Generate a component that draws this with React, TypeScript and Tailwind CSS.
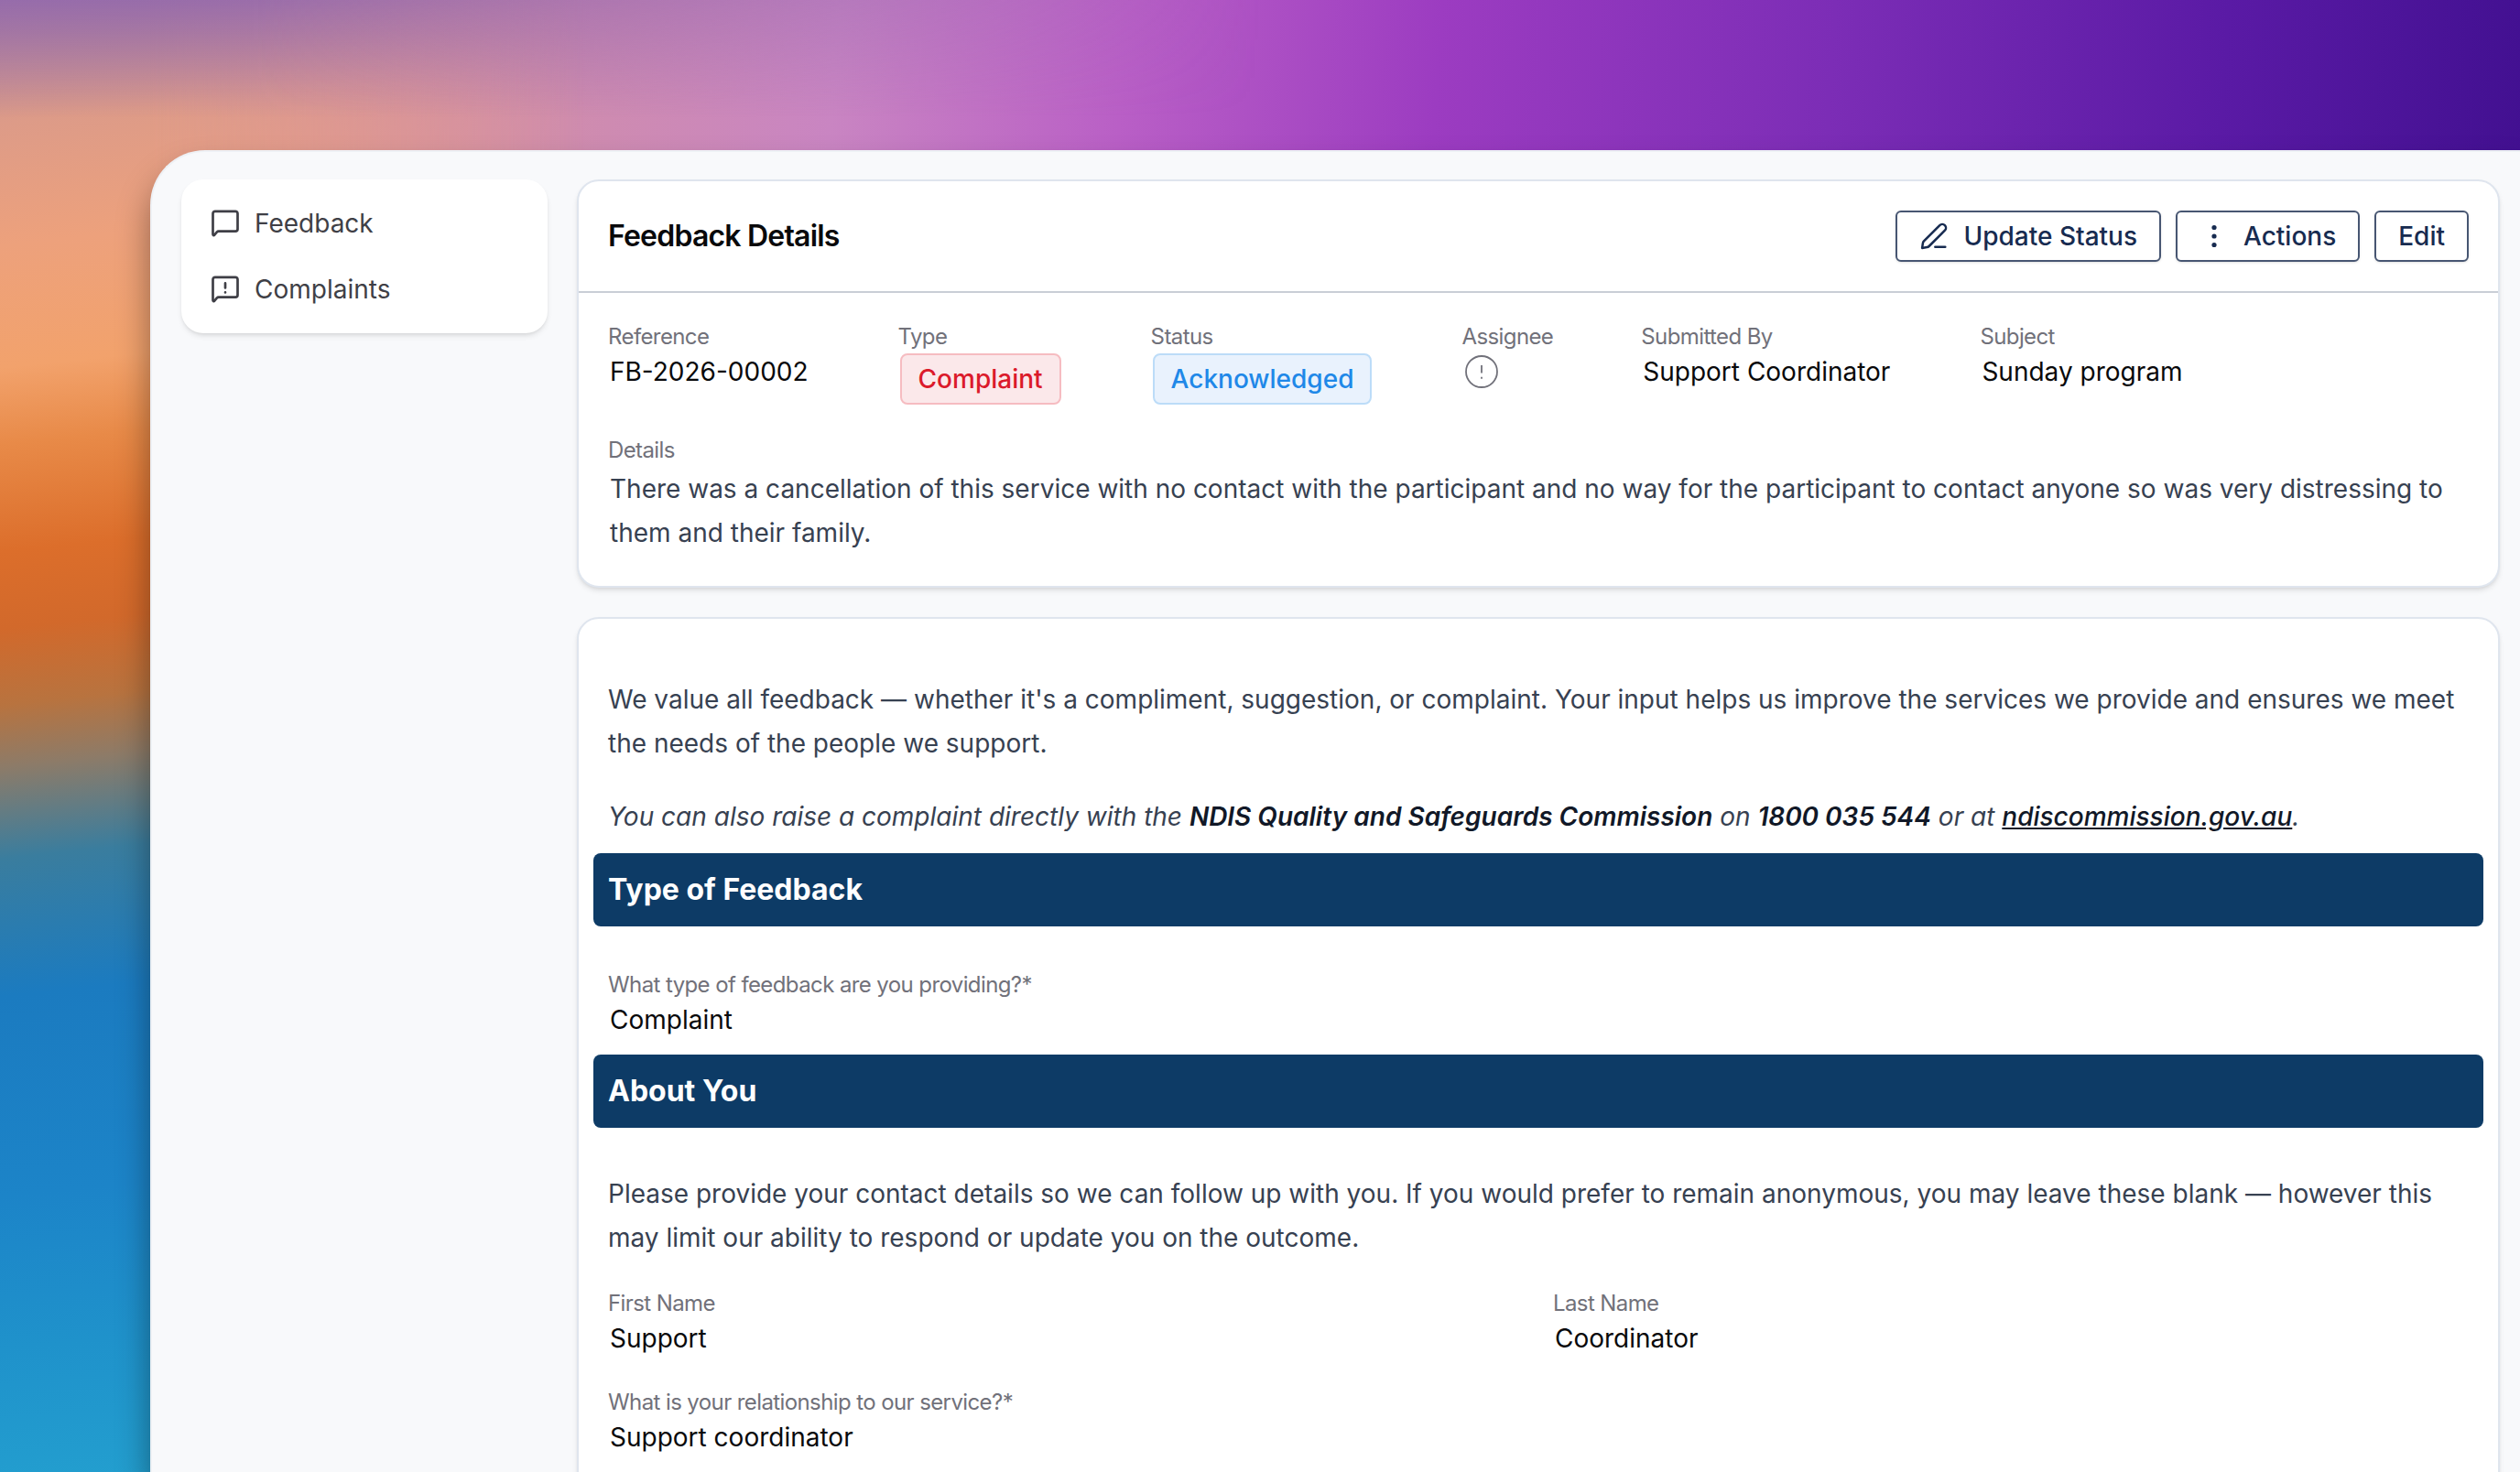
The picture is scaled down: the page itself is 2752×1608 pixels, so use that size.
import { clsx } from "clsx";

const navItems = [
  { label: "Feedback", alert: false },
  { label: "Complaints", alert: true },
];

const BUTTON =
  "flex h-14 items-center rounded-md border-2 border-[#475672] bg-white text-[28px] leading-10 font-medium text-[#172b50] shadow-sm";

function BubbleIcon({ alert }: { alert: boolean }) {
  return (
    <svg
      className="h-9 w-9 shrink-0"
      viewBox="0 0 24 24"
      fill="none"
      stroke="currentColor"
      strokeWidth="1.8"
      strokeLinecap="round"
      strokeLinejoin="round"
      aria-hidden="true"
    >
      <path d="M21 16.2a1.6 1.6 0 0 1-1.6 1.6H7.2a2 2 0 0 0-1.4.6l-1.7 2.1A.65.65 0 0 1 3 20V4.8a1.6 1.6 0 0 1 1.6-1.6h14.8A1.6 1.6 0 0 1 21 4.8z" />
      {alert && <path d="M12 7.6v3.4M12 14.3v.01" />}
    </svg>
  );
}

function PenIcon() {
  return (
    <svg
      className="h-8 w-8"
      viewBox="0 0 32 32"
      fill="none"
      stroke="currentColor"
      strokeWidth="2.5"
      strokeLinecap="round"
      strokeLinejoin="round"
      aria-hidden="true"
    >
      <path d="M3.1 28.9 3.9 23.6Q4.1 22.3 5 21.4L22.3 4.1a3.9 3.9 0 0 1 5.6 5.6L10.6 27Q9.7 27.9 8.4 28.1z" />
      <path d="M17.3 27.7h11" />
    </svg>
  );
}

function DotsIcon() {
  return (
    <svg className="h-8 w-8" viewBox="0 0 32 32" fill="currentColor" aria-hidden="true">
      <circle cx="16" cy="6.5" r="2.6" />
      <circle cx="16" cy="16" r="2.6" />
      <circle cx="16" cy="25.5" r="2.6" />
    </svg>
  );
}

function AlertIcon() {
  return (
    <svg
      className="h-10 w-10 text-[#71717a]"
      viewBox="0 0 40 40"
      fill="none"
      stroke="currentColor"
      strokeWidth="1.8"
      role="img"
      aria-label="Unassigned"
    >
      <circle cx="20" cy="20" r="17" />
      <path d="M20 13v8.5M20 25.8v2" />
    </svg>
  );
}

function Field({ label, children }: { label: string; children: React.ReactNode }) {
  return (
    <div>
      <dt className="text-2xl leading-9 tracking-tight text-[#71717a]">{label}</dt>
      <dd className="flex px-0.5 text-[28px] leading-10 text-[#09090b]">{children}</dd>
    </div>
  );
}

function Badge({ tone, children }: { tone: "red" | "blue"; children: React.ReactNode }) {
  return (
    <span
      className={clsx(
        "rounded-lg border-2 px-4.5 py-1.5 text-[28px] leading-10 font-medium",
        tone === "red" && "border-[#f6bcc1] bg-[#fbe8ea] text-[#db1a2b]",
        tone === "blue" && "border-[#bcdcf8] bg-[#e9f2fd] text-[#2088e8]",
      )}
    >
      {children}
    </span>
  );
}

function SectionBar({ children }: { children: React.ReactNode }) {
  return (
    <h3 className="rounded-lg bg-[#0d3b66] px-4 py-5 text-[32px] leading-10 font-bold text-white">
      {children}
    </h3>
  );
}

function Wallpaper() {
  return (
    <div className="absolute inset-0 bg-[linear-gradient(94deg,#e39a90_0%,#cf8cae_22%,#c985c2_32%,#b95fc6_43%,#9c3cc1_55%,#7c2db6_70%,#5a1aa5_85%,#3b0d8b_100%)]">
      <div className="absolute inset-y-0 left-0 w-160 bg-[linear-gradient(174deg,#b58a9a_0%,#dd9b88_8%,#eda17c_16%,#f2a26c_24%,#e88a48_29%,#dc6e2b_36%,#d2692b_41%,#b8733f_46%,#8d7b68_50%,#3a7d9e_56%,#1b7bc0_65%,#1c84c8_78%,#1f92cb_88%,#24a2d0_100%)] mask-r-from-25%" />
      <div className="absolute inset-x-0 top-0 h-32 bg-[linear-gradient(180deg,rgba(140,98,176,0.75),rgba(140,98,176,0))] mask-r-from-10% mask-r-to-50%" />
    </div>
  );
}

export default function App() {
  return (
    <div className="relative h-screen overflow-hidden pt-41 pl-41 font-[Inter,sans-serif]">
      <Wallpaper />

      <div className="relative flex h-full items-start gap-8 rounded-tl-[60px] border-t-2 border-l-2 border-[#eef1f5] bg-[#f8f9fb] pt-7.5 pr-5.5 pl-8 shadow-[0_24px_36px_rgba(0,0,0,0.4)]">
        <nav className="flex w-100 shrink-0 flex-col gap-8 rounded-3xl bg-white px-7.5 py-7 shadow-md">
          {navItems.map((item) => (
            <a key={item.label} href="#" className="flex items-center gap-3.5 text-[28px] leading-10 text-[#3f3f46]">
              <BubbleIcon alert={item.alert} />
              {item.label}
            </a>
          ))}
        </nav>

        <main className="flex min-w-0 grow flex-col gap-8">
          <section className="rounded-3xl border-2 border-[#dfe5ee] bg-white shadow-md">
            <header className="flex items-center justify-between border-b-2 border-[#c9ced6] px-8 py-8">
              <h2 className="text-[32px] leading-10 font-semibold tracking-tight text-[#09090b]">Feedback Details</h2>
              <div className="flex gap-4">
                <button type="button" className={clsx(BUTTON, "gap-4 px-6")}>
                  <PenIcon />
                  Update Status
                </button>
                <button type="button" className={clsx(BUTTON, "gap-4 px-6")}>
                  <DotsIcon />
                  Actions
                </button>
                <button type="button" className={clsx(BUTTON, "px-6")}>Edit</button>
              </div>
            </header>

            <dl className="flex gap-x-24 px-8 pt-7.5">
              <Field label="Reference">FB-2026-00002</Field>
              <Field label="Type"><Badge tone="red">Complaint</Badge></Field>
              <Field label="Status"><Badge tone="blue">Acknowledged</Badge></Field>
              <Field label="Assignee"><AlertIcon /></Field>
              <Field label="Submitted By">Support Coordinator</Field>
              <Field label="Subject">Sunday program</Field>
            </dl>

            <div className="p-8">
              <h3 className="text-2xl leading-9 tracking-tight text-[#71717a]">Details</h3>
              <p className="px-0.5 pb-0.5 text-[28px] leading-12 text-[#374151]">
                There was a cancellation of this service with no contact with the participant and no way for the
                participant to contact anyone so was very distressing to them and their family.
              </p>
            </div>
          </section>

          <section className="rounded-t-3xl border-2 border-[#dfe5ee] bg-white px-4 pt-16 shadow-md">
            <div className="flex flex-col gap-8 px-4 pb-4 text-[28px] leading-12 text-[#374151]">
              <p>
                We value all feedback — whether it's a compliment, suggestion, or complaint. Your input helps us improve
                the services we provide and ensures we meet the needs of the people we support.
              </p>
              <p className="italic">
                You can also raise a complaint directly with the{" "}
                <strong className="font-semibold text-[#111827]">NDIS Quality and Safeguards Commission</strong> on{" "}
                <strong className="font-semibold text-[#111827]">1800 035 544</strong> or at{" "}
                <a href="#" className="font-medium text-[#111827] underline">ndiscommission.gov.au</a>.
              </p>
            </div>

            <SectionBar>Type of Feedback</SectionBar>
            <dl className="px-4 pt-11.5 pb-4.5">
              <Field label="What type of feedback are you providing?*">Complaint</Field>
            </dl>

            <SectionBar>About You</SectionBar>
            <p className="px-4 pt-12 pb-7.5 text-[28px] leading-12 text-[#374151]">
              Please provide your contact details so we can follow up with you. If you would prefer to remain
              anonymous, you may leave these blank — however this may limit our ability to respond or update you on the
              outcome.
            </p>
            <dl className="grid grid-cols-2 gap-8 px-4 pb-8">
              <Field label="First Name">Support</Field>
              <Field label="Last Name">Coordinator</Field>
              <Field label="What is your relationship to our service?*">Support coordinator</Field>
            </dl>
          </section>
        </main>
      </div>
    </div>
  );
}
